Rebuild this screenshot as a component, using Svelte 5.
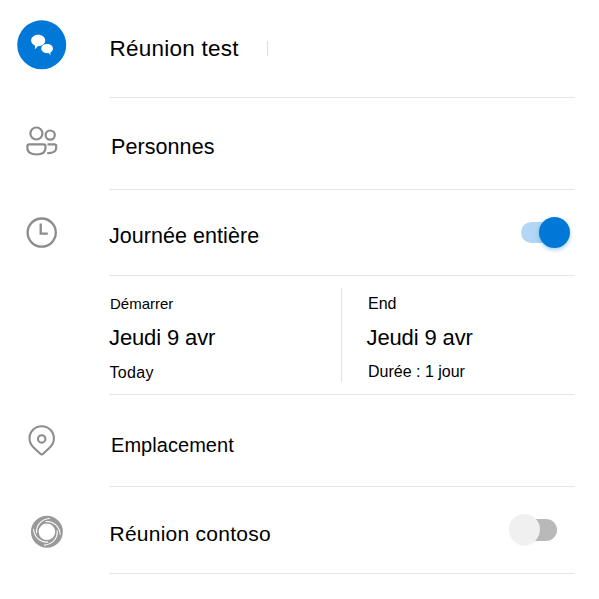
<script>
  let allDay = $state(true);
  let online = $state(false);
  const swirl = [0, 90, 180, 270];
</script>

<main class="form">
  <section class="row title">
    <div class="icon">
      <svg width="109" height="97" viewBox="0 0 109 97" aria-hidden="true">
        <circle cx="41.7" cy="44.8" r="24.5" fill="#0078d7" />
        <path
          fill="#fff"
          d="M38.200 34.800c4 0 7 2.500 7 5.800s-3 5.700-7 5.700l-.8-.1c-.5 1.300-1.300 2.200-2.600 2.900.3-1.200.4-2.300 0-3.500-2.200-1-3.700-2.800-3.700-5 0-3.300 3.100-5.800 7.100-5.800Z"
        />
        <path
          fill="#fff"
          d="M47.100 44c3.400 0 5.900 2 5.900 4.600 0 1.700-1 3.100-2.600 3.900-.2.900 0 1.600.5 2.400-1.200-.4-1.900-1-2.400-1.800l-1.400.1c-3.300 0-5.900-2-5.900-4.600s2.600-4.600 5.900-4.600Z"
        />
      </svg>
    </div>
    <div class="body">
      <span class="label">Réunion test</span>
      <i class="caret"></i>
    </div>
  </section>

  <section class="row people">
    <div class="icon">
      <svg width="109" height="92" viewBox="0 98 109 92" fill="none" stroke="#8c8c8c" stroke-width="2.200" aria-hidden="true">
        <circle cx="36.400" cy="133.500" r="6" />
        <circle cx="50.200" cy="135.100" r="4.600" />
        <path d="M29.200 144.400h14.500c1 0 1.800.8 1.800 1.800v1.800c0 4.400-3.600 6.500-9 6.500s-9.100-2.100-9.100-6.500v-1.800c0-1 .8-1.800 1.800-1.800Z" />
        <path d="M47.500 144.400h7c1 0 1.700.7 1.700 1.700v1.500c0 4-3.200 5.700-9 5.400" />
      </svg>
    </div>
    <div class="body"><span class="label">Personnes</span></div>
  </section>

  <section class="row allday">
    <div class="icon">
      <svg width="109" height="86" viewBox="0 190 109 86" fill="none" stroke="#8c8c8c" stroke-width="2.300" aria-hidden="true">
        <circle cx="41.700" cy="232.600" r="14.100" />
        <path d="M40.700 223.500v10.200h7.100" />
      </svg>
    </div>
    <div class="body">
      <span class="label">Journée entière</span>
      <button class="switch" class:on={allDay} aria-label="Journée entière" onclick={() => (allDay = !allDay)}><i></i></button>
    </div>
  </section>

  <section class="row dates">
    <div class="icon"></div>
    <div class="body">
      <div class="date start">
        <span class="cap">Démarrer</span>
        <strong>Jeudi 9 avr</strong>
        <span class="note">Today</span>
      </div>
      <div class="date end">
        <span class="cap">End</span>
        <strong>Jeudi 9 avr</strong>
        <span class="note">Durée : 1 jour</span>
      </div>
    </div>
  </section>

  <section class="row place">
    <div class="icon">
      <svg width="109" height="92" viewBox="0 395 109 92" fill="none" stroke="#8c8c8c" stroke-width="2.100" stroke-linejoin="round" aria-hidden="true">
        <path d="M41.700 426.300c-6.900 0-12.200 5.300-12.200 12.100 0 4 1.800 6.900 4.600 9.600l6.500 6.100c.6.600 1.600.6 2.200 0l6.500-6.100c2.800-2.700 4.600-5.600 4.600-9.600 0-6.800-5.300-12.100-12.200-12.100Z" />
        <circle cx="41.700" cy="438.900" r="3.700" />
      </svg>
    </div>
    <div class="body"><span class="label">Emplacement</span></div>
  </section>

  <section class="row online">
    <div class="icon">
      <svg width="109" height="86" viewBox="0 487 109 86" fill="none" aria-hidden="true">
        <g transform="translate(46.900 531.800)">
          <circle r="12.100" stroke="#999" stroke-width="7.700" />
          {#each swirl as angle}
            <path
              transform="rotate({angle})"
              stroke="#fff"
              stroke-width="1.100"
              stroke-linecap="round"
              d="M-10.300 1C-11 -6.500 -5.500 -12.600 2.500 -13.300"
            />
          {/each}
        </g>
      </svg>
    </div>
    <div class="body">
      <span class="label">Réunion contoso</span>
      <button class="switch" class:on={online} aria-label="Réunion contoso" onclick={() => (online = !online)}><i></i></button>
    </div>
  </section>
</main>

<style>
  :global(body) {
    margin: 0;
    background: #fff;
  }

  .form {
    box-sizing: border-box;
    width: 599px;
    height: 599px;
    overflow: hidden;
    background: #fff;
    color: #000;
    font-family: "Liberation Sans", Arial, sans-serif;
  }

  .row {
    display: grid;
    grid-template-columns: 109px 466px;
    height: 92px;
  }

  .icon svg {
    display: block;
  }

  .body {
    box-sizing: border-box;
    display: flex;
    align-items: flex-start;
    border-bottom: 1px solid #e6e6e6;
  }

  .label {
    font-size: 22px;
    line-height: 24px;
    white-space: nowrap;
  }

  .title { height: 98px; }
  .title .body { padding-top: 36px; }
  .title .label {
    font-size: 22.5px;
    letter-spacing: 0.25px;
    padding: 1px 0 0 0.5px;
  }
  .caret {
    width: 1px;
    height: 15px;
    margin: 5px 307px 0 auto;
    background: #dedede;
  }

  .people .body { padding: 37px 0 0 2px; }
  .people .label {
    font-size: 21.5px;
    letter-spacing: 0.08px;
  }

  .allday { height: 86px; }
  .allday .body { padding-top: 34px; }
  .allday .label {
    font-size: 21.5px;
    letter-spacing: 0.05px;
  }

  .dates { height: 119px; }
  .dates .body { padding-top: 12px; }
  .date {
    box-sizing: border-box;
    height: 94px;
    display: flex;
    flex-direction: column;
    white-space: nowrap;
  }
  .start {
    width: 233px;
    border-right: 1px solid #e2e2e2;
  }
  .end { padding-left: 25px; }
  .cap {
    font-size: 15px;
    line-height: 20px;
    padding: 6px 0 0 1px;
  }
  .end .cap {
    font-size: 16px;
  }
  .date strong {
    font-size: 22px;
    font-weight: 400;
    line-height: 24px;
    letter-spacing: -0.12px;
    padding-top: 12px;
  }
  .end strong { margin-left: -0.5px; }
  .note {
    font-size: 16px;
    line-height: 20px;
    letter-spacing: 0.3px;
    padding: 13px 0 0 0.5px;
  }
  .end .note {
    letter-spacing: 0;
    padding: 12px 0 0 1px;
  }

  .place .body { padding: 38px 0 0 2px; }
  .place .label {
    font-size: 20px;
    letter-spacing: 0.05px;
  }

  .online { height: 87px; }
  .online .body { padding-top: 35px; }
  .online .label {
    font-size: 21px;
    letter-spacing: 0.25px;
    padding-left: 0.5px;
  }

  .switch {
    position: relative;
    z-index: 0;
    display: flex;
    align-items: center;
    box-sizing: border-box;
    width: 49px;
    height: 31px;
    margin: -8px 17.500px 0 auto;
    padding: 0;
    border: 0;
    background: none;
    cursor: pointer;
  }
  .switch::before {
    content: "";
    position: absolute;
    z-index: -1;
    inset: 5px 0.5px 4px 10px;
    border-radius: 11px;
    background: #b9b9b9;
  }
  .switch i {
    width: 31px;
    height: 31px;
    border-radius: 50%;
    background: #f0f0f0;
    box-shadow: 0 1px 2px #0000000a;
  }
  .switch.on {
    justify-content: flex-end;
    margin: -7px 5.500px 0 auto;
  }
  .switch.on::before {
    inset: 5px 10px 5px 0;
    background: #b2d6f3;
  }
  .switch.on i {
    background: #0078d7;
    box-shadow: 0 2px 4px #0078d755;
  }
</style>
